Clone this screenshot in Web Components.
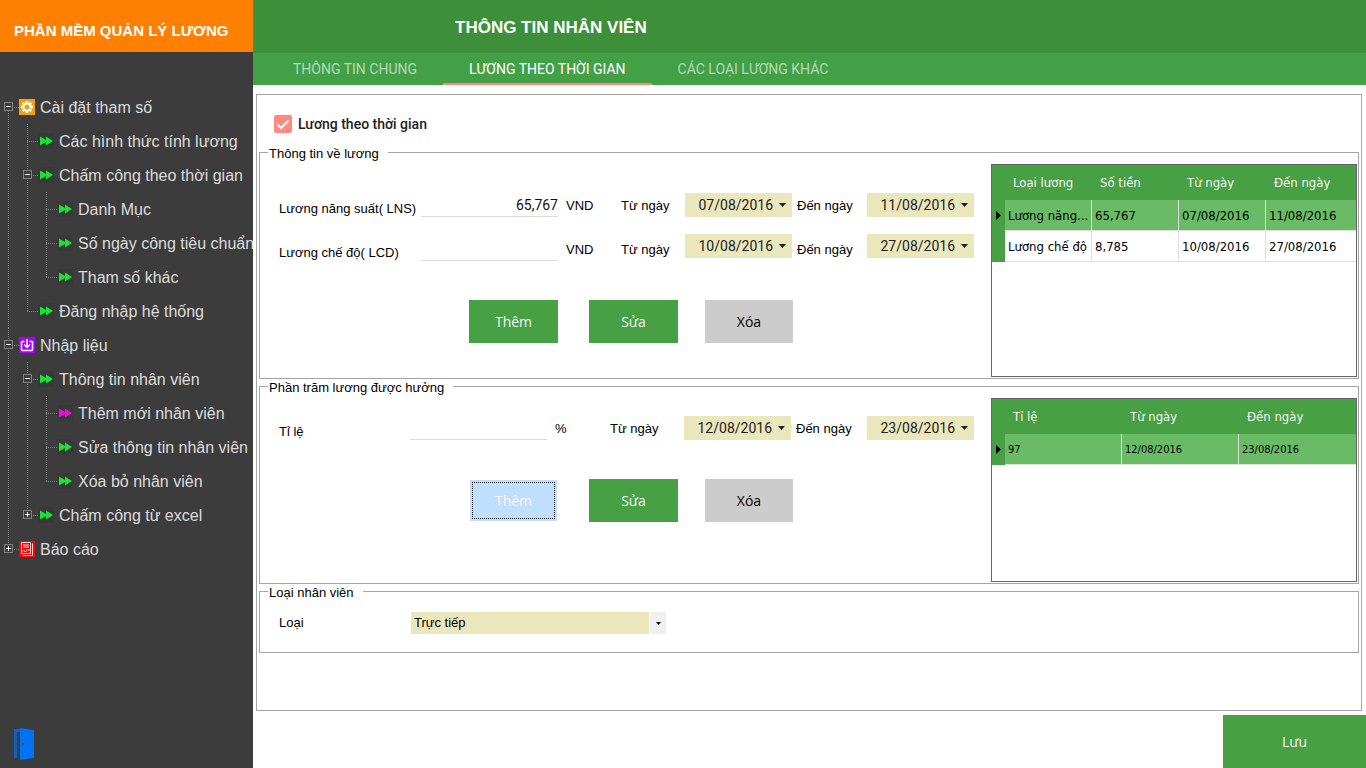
<!DOCTYPE html>
<html lang="vi">
<head>
<meta charset="utf-8">
<title>Phần mềm quản lý lương</title>
<style>
  body { margin: 0; font: 13px/18px "Liberation Sans", Arial, sans-serif; color: #000; background: #fff; }
</style>
</head>
<body>
<app-shell>
  <span slot="brand">PHẦN MỀM QUẢN LÝ LƯƠNG</span>
  <nav slot="nav" aria-label="Chức năng">
    <tree-item first icon="gear" state="open" label="Cài đặt tham số">
      <tree-item label="Các hình thức tính lương"></tree-item>
      <tree-item state="open" label="Chấm công theo thời gian">
        <tree-item label="Danh Mục"></tree-item>
        <tree-item label="Số ngày công tiêu chuẩn"></tree-item>
        <tree-item last label="Tham số khác"></tree-item>
      </tree-item>
      <tree-item last label="Đăng nhập hệ thống"></tree-item>
    </tree-item>
    <tree-item icon="import" state="open" label="Nhập liệu">
      <tree-item state="open" label="Thông tin nhân viên">
        <tree-item icon="current" label="Thêm mới nhân viên"></tree-item>
        <tree-item label="Sửa thông tin nhân viên"></tree-item>
        <tree-item last label="Xóa bỏ nhân viên"></tree-item>
      </tree-item>
      <tree-item last state="closed" label="Chấm công từ excel"></tree-item>
    </tree-item>
    <tree-item last icon="report" state="closed" label="Báo cáo"></tree-item>
  </nav>
  <span slot="title">THÔNG TIN NHÂN VIÊN</span>
  <tab-bar slot="tabs" selected="1" tabs="THÔNG TIN CHUNG|LƯƠNG THEO THỜI GIAN|CÁC LOẠI LƯƠNG KHÁC"></tab-bar>

  <check-field label="Lương theo thời gian"></check-field>

  <group-box>
    <span slot="legend">Thông tin về lương</span>
    <entry-form style="--top: 32px">
      <field-row>
        <amount-field label="Lương năng suất( LNS)" value="65,767" unit="VND"></amount-field>
        <date-field label="Từ ngày" value="07/08/2016" style="--label: 64px"></date-field>
        <date-field label="Đến ngày" value="11/08/2016"></date-field>
      </field-row>
      <field-row tall>
        <amount-field label="Lương chế độ( LCD)" value="" unit="VND"></amount-field>
        <date-field label="Từ ngày" value="10/08/2016" style="--label: 64px"></date-field>
        <date-field label="Đến ngày" value="27/08/2016"></date-field>
      </field-row>
      <action-button slot="actions">Thêm</action-button>
      <action-button slot="actions">Sửa</action-button>
      <action-button slot="actions" kind="muted">Xóa</action-button>
    </entry-form>
    <data-grid style="--height: 211px" widths="87,87,87," columns="Loại lương|Số tiền|Từ ngày|Đến ngày"
      rows="Lương năng...|65,767|07/08/2016|11/08/2016;Lương chế độ|8,785|10/08/2016|27/08/2016"></data-grid>
  </group-box>

  <group-box>
    <span slot="legend">Phần trăm lương được hưởng</span>
    <entry-form style="--top: 21px">
      <field-row>
        <amount-field label="Tỉ lệ" value="" unit="%" style="--label: 131px"></amount-field>
        <date-field label="Từ ngày" value="12/08/2016" style="--label: 74px"></date-field>
        <date-field label="Đến ngày" value="23/08/2016" style="--label: 71px"></date-field>
      </field-row>
      <action-button slot="actions" kind="focused">Thêm</action-button>
      <action-button slot="actions">Sửa</action-button>
      <action-button slot="actions" kind="muted">Xóa</action-button>
    </entry-form>
    <data-grid style="--height: 182px; --cell: 11px" widths="117,117," columns="Tỉ lệ|Từ ngày|Đến ngày"
      rows="97|12/08/2016|23/08/2016"></data-grid>
  </group-box>

  <group-box>
    <span slot="legend">Loại nhân viên</span>
    <choice-field label="Loại" options="Trực tiếp|Gián tiếp"></choice-field>
  </group-box>

  <action-button slot="footer" kind="save">Lưu</action-button>
</app-shell>

<script>
const define = (name, render) => customElements.define(name, class extends HTMLElement {
  connectedCallback() {
    if (this.shadowRoot) return;
    this.attachShadow({ mode: "open" }).innerHTML = render(this);
  }
});
const attr = (el, name) => el.getAttribute(name) || "";

define("app-shell", () => `
  <style>
    :host { display: grid; grid-template-columns: 253px minmax(0, 1fr); min-height: 100vh; }
    aside { display: flex; flex-direction: column; background: #3c3c3c; color: #dcdcdc; overflow: hidden; }
    .brand { height: 52px; box-sizing: border-box; padding: 21px 0 0 14px; background: #ff8000; color: #fff;
             font: bold 15px/20px "Liberation Sans", Arial, sans-serif; white-space: nowrap; }
    .nav { flex: 1; padding-top: 38px; }
    .exit { margin: 0 0 8px 14px; padding: 0; border: 0; background: none; width: 20px; height: 32px; }
    .exit svg { display: block; }
    .page { display: flex; flex-direction: column; }
    header { height: 53px; box-sizing: border-box; padding: 17px 0 0 202px; background: #3d8f39; color: #fff; }
    h1 { margin: 0; font: bold 17px/22px "Liberation Sans", Arial, sans-serif; }
    main { flex: 1; margin: 9px 4px 4px 3px; border: 1px solid #a5a5a5; padding: 0 2px; }
    footer { display: flex; justify-content: flex-end; }
  </style>
  <aside>
    <div class="brand"><slot name="brand"></slot></div>
    <div class="nav"><slot name="nav"></slot></div>
    <button class="exit" type="button" aria-label="Thoát">
      <svg width="20" height="32" viewBox="0 0 20 32"><path d="M0 1H6V4H3V30H0Z" fill="#0a62c8"/><path d="M6 0L20 2V30L6 32Z" fill="#0072f5"/><path d="M8 15h2v2H8z" fill="#3c3c3c"/></svg>
    </button>
  </aside>
  <div class="page">
    <header><h1><slot name="title"></slot></h1></header>
    <slot name="tabs"></slot>
    <main><slot></slot></main>
    <footer><slot name="footer"></slot></footer>
  </div>`);

const arrows = color => `<svg width="16" height="16" viewBox="0 0 16 16"><path d="M0 0h16v16H0z" fill="#383838"/><path d="M2 3.500L8 7V3.500L15 8L8 12.500V9L2 12.500Z" fill="${color}"/></svg>`;
const icons = {
  "": arrows("#14e632"),
  current: arrows("#f50adc"),
  gear: `<svg width="16" height="16" viewBox="0 0 16 16"><path d="M0 0h16v16H0z" fill="#f0a30a"/><g stroke="#fff" fill="none"><circle cx="8" cy="8" r="3.6" stroke-width="2"/><path d="M8 2v2M8 12v2M2 8h2M12 8h2M3.8 3.8l1.4 1.4M10.8 10.8l1.4 1.4M12.2 3.8l-1.4 1.4M5.2 10.8l-1.4 1.4" stroke-width="2.4"/></g></svg>`,
  import: `<svg width="16" height="16" viewBox="0 0 16 16"><path d="M0 0h16v16H0z" fill="#a0f"/><path d="M5.5 4.5H3.2Q2.5 4.500 2.500 5.200V12.800Q2.500 13.500 3.200 13.500H12.800Q13.500 13.500 13.500 12.800V5.200Q13.500 4.500 12.800 4.500H10.500M8 2V10M5 7.500L8 10.500L11 7.500" fill="none" stroke="#fff" stroke-width="1.500"/></svg>`,
  report: `<svg width="16" height="16" viewBox="0 0 16 16"><path d="M0 0h16v16H0z" fill="#f00a0a"/><path d="M2.500 1.500H11.500V12.500H2.500ZM4 4H10M4 6H10M13.500 2.500V14.500H4M3.500 10.500L5 9L6.500 11L8.500 8.500L11 9.500" fill="none" stroke="#ffd0d0"/></svg>`
};

define("tree-item", el => {
  const state = attr(el, "state");
  return `
  <style>
    :host { display: grid; grid-template-columns: 19px minmax(0, 1fr); --from: 0; --len: 100%; }
    :host([first]) { --from: 17px; }
    :host([last]) { --len: 17px; }
    .gutter { padding: 12px 0 0 4px;
      background:
        repeating-linear-gradient(#828282 0 1px, transparent 1px 2px) 8px var(--from) / 1px var(--len) no-repeat,
        repeating-linear-gradient(90deg, #828282 0 1px, transparent 1px 2px) 8px 17px / 11px 1px no-repeat; }
    button { display: block; width: 9px; height: 9px; box-sizing: border-box; padding: 0; border: 1px solid #828282;
      background: linear-gradient(#fff 0 0) center / 5px 1px no-repeat #3c3c3c; }
    button.closed { background: linear-gradient(#fff 0 0) center / 5px 1px no-repeat, linear-gradient(#fff 0 0) center / 1px 5px no-repeat #3c3c3c; }
    a { display: flex; align-items: center; gap: 5px; height: 34px; color: inherit; text-decoration: none;
      font: 16px/20px "Liberation Sans", Arial, sans-serif; white-space: nowrap; }
    span { padding-top: 2px; }
    svg { flex: none; }
  </style>
  <div class="gutter">${state ? `<button type="button" class="${state}" aria-expanded="${state === "open"}" aria-label="Mở hoặc đóng"></button>` : ""}</div>
  <div><a href="#">${icons[attr(el, "icon")]}<span>${attr(el, "label")}</span></a><slot></slot></div>`;
});

define("tab-bar", el => `
  <style>
    :host { display: flex; height: 32px; padding-left: 14px; background: #43a047; }
    button { padding: 2px 26px 0; border: 0; border-bottom: 2px solid transparent; background: none; color: #b4dab5;
      font: 14px/18px Roboto, sans-serif; white-space: nowrap; }
    button[aria-selected=true] { color: #fff; border-color: #ff8a80; }
  </style>
  ${attr(el, "tabs").split("|").map((t, i) => `<button type="button" role="tab" aria-selected="${i == attr(el, "selected")}">${t}</button>`).join("")}`);

define("check-field", el => `
  <style>
    :host { display: block; padding: 20px 0 0 15px; height: 29px; }
    label { display: inline-flex; align-items: center; gap: 6px; height: 18px; font: 500 14px/18px Roboto, sans-serif; color: #212121; }
    .box { display: grid; width: 18px; height: 18px; }
    input, svg { grid-area: 1 / 1; margin: 0; }
    input { appearance: none; width: 18px; height: 18px; border-radius: 2px; background: #ff8a80; }
    svg { pointer-events: none; }
  </style>
  <label><span class="box"><input type="checkbox" checked><svg width="18" height="18" viewBox="0 0 18 18"><path d="M3.500 9.500L7 13L14.500 5.500" fill="none" stroke="#fff" stroke-width="2"/></svg></span>${attr(el, "label")}</label>`);

/* Neighbouring boxes share one pixel: the next legend sits half above its own border. */
define("group-box", () => `
  <style>
    :host { display: block; margin-bottom: -1px; }
    fieldset { display: block; min-width: 0; margin: 0; padding: 0 1px 1px 0; border: 1px solid #a5a5a5; }
    legend { margin-left: 8px; padding: 3px 9px 0 1px; line-height: 14px; }
    .body { display: flex; }
  </style>
  <fieldset><legend><slot name="legend"></slot></legend><div class="body"><slot></slot></div></fieldset>`);

define("entry-form", () => `
  <style>
    :host { display: block; flex: 1; min-width: 0; padding: var(--top) 0 0 19px; }
    .fields { display: grid; gap: 17px; }
    .actions { display: grid; grid-template-columns: 120px 116px 88px; padding: 39px 0 0 190px; }
  </style>
  <div class="fields"><slot></slot></div>
  <div class="actions"><slot name="actions"></slot></div>`);

define("field-row", () => `
  <style>
    :host { display: flex; height: 24px; }
    :host([tall]) { height: 27px; }
  </style><slot></slot>`);

define("amount-field", el => `
  <style>
    :host { display: flex; align-items: flex-end; }
    label { width: var(--label, 142px); line-height: 16px; white-space: nowrap; }
    input { width: 137px; height: 24px; box-sizing: border-box; margin: 0 8px 0 0; padding: 0; border: 0;
      border-bottom: 1px solid #dcdcdc; background: none; font: 14px/23px Roboto, sans-serif; text-align: right; color: #111; outline: 0; }
    span { width: 55px; line-height: 22px; }
  </style>
  <label for="v">${attr(el, "label")}</label><input id="v" value="${attr(el, "value")}"><span>${attr(el, "unit")}</span>`);

define("date-field", el => `
  <style>
    :host { display: flex; margin-right: 5px; }
    label { width: var(--label, 70px); line-height: 22px; align-self: flex-end; white-space: nowrap; }
    .picker { display: flex; width: 107px; height: 24px; background: #ebe7bd; }
    input { flex: 1; min-width: 0; padding: 0; border: 0; background: none; font: 14px/24px Roboto, sans-serif;
      text-align: right; color: #222; outline: 0; }
    button { display: grid; place-items: center; width: 19px; padding: 0; border: 0; background: none; }
  </style>
  <label for="d">${attr(el, "label")}</label>
  <div class="picker"><input id="d" value="${attr(el, "value")}"><button type="button" aria-label="Chọn ngày"><svg width="7" height="4" viewBox="0 0 7 4"><path d="M0 0H7L3.500 4Z" fill="#222"/></svg></button></div>`);

define("action-button", el => `
  <style>
    :host { display: block; }
    button { width: 89px; height: 43px; box-sizing: border-box; padding: 0; border: 0; background: #47a044; color: #f5f5f5;
      font: 14px/20px "Open Sans", "Noto Sans", sans-serif; }
    .muted { width: 88px; background: #ccc; color: #000; }
    .focused { border: 1px solid transparent; background: #c0dfff padding-box; outline: 1px dotted #000; outline-offset: -4px; }
    .save { width: 143px; height: 53px; }
  </style>
  <button type="button" class="${attr(el, "kind")}"><slot></slot></button>`);

define("data-grid", el => {
  const head = attr(el, "columns").split("|");
  const rows = attr(el, "rows").split(";").map(r => r.split("|"));
  const widths = attr(el, "widths").split(",");
  return `
  <style>
    :host { display: block; flex: 0 0 364px; height: var(--height); margin-top: 3px; border: 1px solid #646464;
      font: 13px/18px "DejaVu Sans Condensed", Tahoma, "DejaVu Sans", sans-serif; }
    table { width: 100%; table-layout: fixed; border-collapse: separate; border-spacing: 0; }
    th, td { box-sizing: border-box; padding: 0; text-align: left; font-weight: normal; white-space: nowrap; }
    thead th { height: 35px; padding-left: 8px; background: #47a044; color: #f5f5f5; }
    tbody th { background: #47a044; padding-left: 4px; }
    tbody td { height: 31px; padding: 2px 0 0 3px; border-right: 1px solid #dedede; border-bottom: 1px solid #dedede; font-size: var(--cell, 13px); }
    td:last-child { border-right: 0; }
    tbody tr:first-child td { background: #69bb66; }
    svg { display: block; }
  </style>
  <table>
    <colgroup><col style="width:13px">${widths.map(w => `<col${w ? ` style="width:${w}px"` : ""}>`).join("")}</colgroup>
    <thead><tr><th></th>${head.map(h => `<th scope="col">${h}</th>`).join("")}</tr></thead>
    <tbody>${rows.map((r, i) => `<tr><th scope="row">${i ? "" : `<svg width="5" height="9" viewBox="0 0 5 9"><path d="M0 0L5 4.500L0 9Z"/></svg>`}</th>${r.map(c => `<td>${c}</td>`).join("")}</tr>`).join("")}</tbody>
  </table>`;
});

define("choice-field", el => `
  <style>
    :host { display: flex; align-items: center; padding: 12px 0 17px 19px; }
    label { width: 132px; }
    .box { display: grid; width: 255px; height: 22px; }
    select, svg { grid-area: 1 / 1; }
    select { appearance: none; margin: 0; padding: 0 20px 0 3px; border: 0; border-radius: 0; outline: 0; color: #000;
      font: inherit; background: linear-gradient(90deg, #ebe7bd 238px, #fff 238px 239px, #f0f0f0 239px); }
    svg { place-self: center end; margin-right: 5px; pointer-events: none; }
  </style>
  <label for="s">${attr(el, "label")}</label>
  <div class="box"><select id="s">${attr(el, "options").split("|").map(o => `<option>${o}</option>`).join("")}</select>
  <svg width="5" height="3" viewBox="0 0 5 3"><path d="M0 0H5L2.500 3Z"/></svg></div>`);
</script>
</body>
</html>
